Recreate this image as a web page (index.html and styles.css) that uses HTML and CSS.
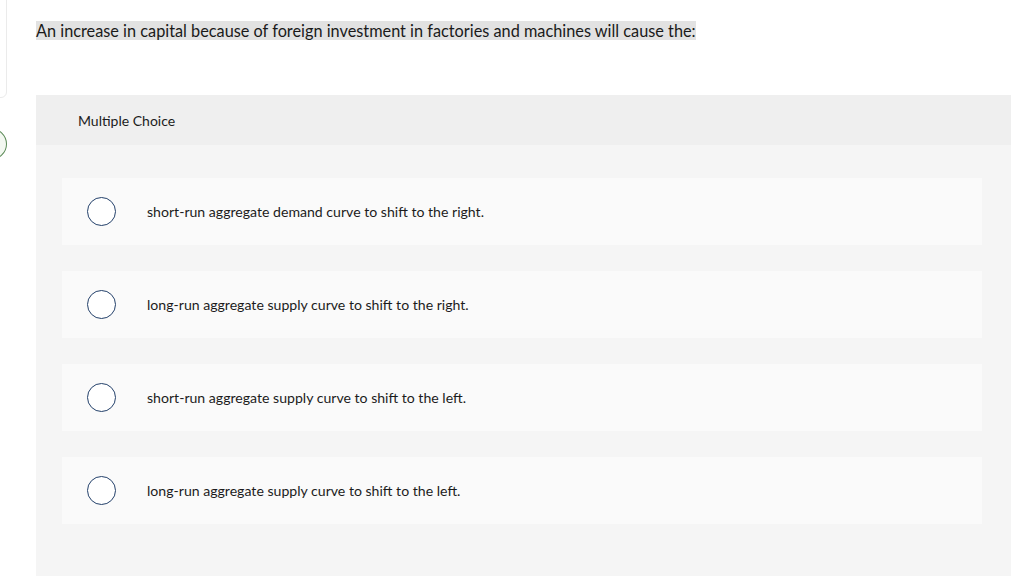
FILE: index.html
```html
<!DOCTYPE html>
<html>
<head>
<meta charset="utf-8">
<link rel="stylesheet" href="styles.css">
</head>
<body>
<div class="side-card"></div>
<div class="side-dot"></div>
<main class="page">
  <div class="question"><span class="q-text">An increase in capital because of foreign investment in factories and machines will cause the:</span></div>
  <section class="panel">
    <header class="panel-head">Multiple Choice</header>
    <div class="options">
      <div class="option"><span class="radio"></span><span class="opt-text">short-run aggregate demand curve to shift to the right.</span></div>
      <div class="option"><span class="radio"></span><span class="opt-text">long-run aggregate supply curve to shift to the right.</span></div>
      <div class="option"><span class="radio"></span><span class="opt-text">short-run aggregate supply curve to shift to the left.</span></div>
      <div class="option"><span class="radio"></span><span class="opt-text">long-run aggregate supply curve to shift to the left.</span></div>
    </div>
  </section>
</main>
</body>
</html>
```
FILE: styles.css
```css
html, body {
  margin: 0;
  padding: 0;
  background: #ffffff;
  width: 1024px;
  height: 576px;
  overflow: hidden;
  font-family: Lato, "Liberation Sans", sans-serif;
  color: #1a1a1a;
}
.side-card {
  position: absolute;
  left: -20px;
  top: -10px;
  width: 25px;
  height: 106px;
  border: 1px solid #ebebeb;
  border-radius: 6px;
  background: #fff;
}
.side-dot {
  position: absolute;
  left: -26px;
  top: 128px;
  width: 31px;
  height: 30px;
  border: 1px solid #5b8a57;
  border-radius: 50%;
  background: #f3f8f1;
}
.page {
  padding: 21px 13px 0 36px;
}
.question {
  height: 74px;
  font-size: 16.3px;
  line-height: 20px;
}
.q-text {
  background: #e2e2e2;
}
.panel {
  background: #f5f5f5;
  height: 481px;
}
.panel-head {
  background: #efefef;
  height: 50px;
  padding-left: 42px;
  display: flex;
  align-items: center;
  font-size: 14px;
  color: #1c1c1c;
}
.options {
  padding: 33px 29px 0 26px;
  display: flex;
  flex-direction: column;
  gap: 26px;
}
.option {
  background: #fafafa;
  height: 67px;
  display: flex;
  align-items: center;
  padding-left: 25px;
}
.radio {
  width: 27px;
  height: 27px;
  border: 1px solid #23406a;
  border-radius: 50%;
  background: #fff;
  flex: none;
}
.opt-text {
  margin-left: 31px;
  font-size: 14.1px;
  color: #1c1c1c;
}
```
